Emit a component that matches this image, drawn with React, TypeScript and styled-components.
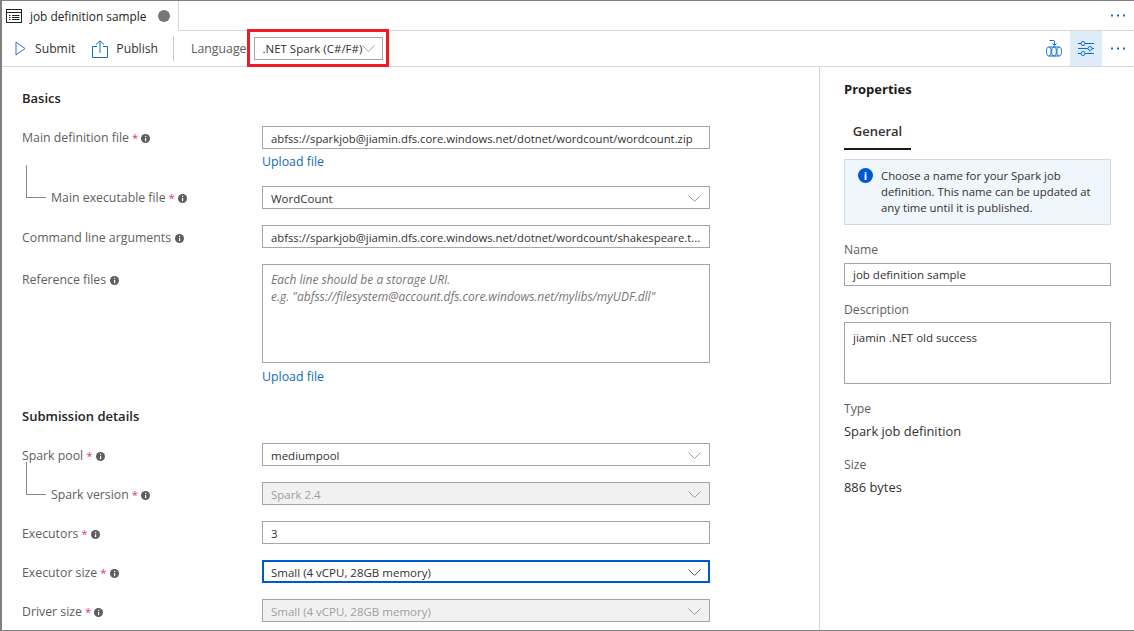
import React from "react";
import styled, { createGlobalStyle } from "styled-components";

const Global = createGlobalStyle`
  html, body { margin: 0; padding: 0; background: #fff; }
  body { font-family: "Open Sans", "Noto Sans", "Liberation Sans", sans-serif; font-size: 12px; color: #323130; }
  * { box-sizing: border-box; }
`;

const Frame = styled.div`
  width: 1134px; height: 631px; overflow: hidden; background: #fff;
  border-top: 1px solid #808080; border-left: 2px solid #808080; border-bottom: 1px solid #808080;
  display: flex; flex-direction: column;
`;
const TabBar = styled.div`
  height: 30px; flex: none; display: flex; align-items: stretch; justify-content: space-between;
  border-bottom: 1px solid #d8d8d8;
`;
const Tab = styled.div`
  width: 177px; display: flex; align-items: center; padding-left: 4px; gap: 8px;
  border-right: 1px solid #d8d8d8; margin-bottom: -1px; background: #fff; font-size: 11.85px; color: #252423;
`;
const TabTitle = styled.span` flex: 1; white-space: nowrap; `;
const DirtyDot = styled.span`
  width: 12px; height: 12px; border-radius: 50%; background: #7a7574; margin-right: 8px;
`;
const More = styled.div`
  width: 32px; display: flex; align-items: center; justify-content: center; color: #0f6cdd;
`;
const Toolbar = styled.div`
  height: 36px; flex: none; display: flex; align-items: center; border-bottom: 1px solid #d8d8d8; position: relative;
`;
const ToolButton = styled.div<{ $gap: number; $left: number }>`
  display: flex; align-items: center; gap: ${p => p.$gap}px; margin-left: ${p => p.$left}px; color: #323130; font-size: 12.2px;
`;
const ToolSep = styled.div` width: 1px; height: 25px; background: #c8c8c8; margin: 0 17px 0 15px; `;
const LangLabel = styled.span` color: #605e5c; font-size: 12.3px; `;
const Highlight = styled.div`
  border: 3px solid #ed1c24; height: 38px; margin: -1px 0 0 1px; padding: 3px; width: 142px; display: flex; align-items: center;
`;
const LangSelect = styled.div`
  width: 130px; height: 23px; border: 1px solid #a6a6a6; display: flex; align-items: center; justify-content: space-between;
  padding: 0 7px 0 7px; font-size: 11.5px; color: #323130; white-space: nowrap; margin-left: 1px;
`;
const ToolRight = styled.div` margin-left: auto; display: flex; align-items: stretch; height: 35px; `;
const IconButton = styled.div<{ $active?: boolean }>`
  width: 32px; display: flex; align-items: center; justify-content: center; background: ${p => (p.$active ? "#deecf9" : "transparent")};
`;
const Body = styled.div` flex: 1; display: flex; min-height: 0; `;
const Main = styled.div`
  width: 818px; flex: none; border-right: 1px solid #d2d2d2; padding: 21px 0 0 20px; overflow: hidden;
`;
const Heading = styled.h2<{ $bottom: number }>`
  margin: 0 0 ${p => p.$bottom}px; font-size: 13px; line-height: 20px; font-weight: 600; color: #252423;
`;
const Row = styled.div<{ $bottom?: number }>`
  display: flex; align-items: flex-start; margin-bottom: ${p => p.$bottom ?? 16}px;
`;
const Label = styled.div<{ $child?: boolean; $tall?: number; $drop?: number; $shift?: number }>`
  width: 240px; flex: none; height: 23px; display: flex; align-items: center; gap: 4px; color: #605e5c; font-size: 12.3px;
  padding-left: ${p => (p.$child ? 29 : 0)}px; padding-top: ${p => p.$shift ?? 1}px; position: relative; white-space: nowrap;
  ${p => p.$child && `
    &::before {
      content: ""; position: absolute; left: 4px; bottom: ${p.$drop}px; width: 19px; height: ${p.$tall}px;
      border-left: 1px solid #8a8886; border-bottom: 1px solid #8a8886;
    }
  `}
`;
const Req = styled.span` color: #d9435f; font-size: 11.5px; margin-left: -1px; margin-right: -1px; `;
const Control = styled.div` width: 448px; flex: none; `;
const Field = styled.div<{ $disabled?: boolean; $focus?: boolean; $long?: boolean }>`
  height: 23px; display: flex; align-items: center; justify-content: space-between; white-space: nowrap; overflow: hidden;
  border: ${p => (p.$focus ? "2px solid #0058d1" : "1px solid #a6a6a6")};
  padding: 1px ${p => (p.$focus ? 7 : 8)}px 0;
  background: ${p => (p.$disabled ? "#f1f1f1" : "#fff")};
  color: ${p => (p.$disabled ? "#a19f9d" : "#323130")};
  font-size: ${p => (p.$long ? 11.3 : 11.5)}px;
`;
const TextArea = styled.div`
  height: 99px; border: 1px solid #a6a6a6; padding: 6px 8px; color: #7a7574; font-style: italic; font-size: 12px; line-height: 17px;
`;
const UploadLink = styled.div<{ $top: number }>`
  color: #0f6cbd; font-size: 12.35px; height: 16px; line-height: 16px; margin-top: ${p => p.$top}px;
`;
const Side = styled.div` flex: 1; padding: 12px 23px 0 24px; `;
const SideTitle = styled.div` font-weight: 700; font-size: 13px; line-height: 20px; color: #1b1a19; margin-bottom: 22px; `;
const SideTab = styled.div`
  width: 67px; height: 29px; border-bottom: 2px solid #1b1a19; text-align: center; font-size: 13px; line-height: 21px; font-weight: 600; color: #323130; margin-bottom: 9px;
`;
const Notice = styled.div`
  height: 66px; background: #eff6fc; border: 1px solid #cfdbea; display: flex; gap: 8px; padding: 8px 8px 0 13px; font-size: 11.35px; line-height: 16px; color: #323130;
`;
const NoticeIcon = styled.div`
  width: 15px; height: 15px; flex: none; border-radius: 50%; background: #0058d1; color: #fff; display: flex; align-items: center; justify-content: center;
  font-size: 11px; font-weight: 700; line-height: 15px;
`;
const SideLabel = styled.div<{ $top: number; $bottom: number }>`
  color: #605e5c; font-size: 12.2px; line-height: 16px; margin-top: ${p => p.$top}px; margin-bottom: ${p => p.$bottom}px;
`;
const SideInput = styled.div`
  height: 23px; border: 1px solid #a6a6a6; padding: 0 8px; display: flex; align-items: center; font-size: 11.5px; color: #323130;
`;
const SideArea = styled.div`
  height: 62px; border: 1px solid #a6a6a6; padding: 6px 8px; font-size: 11.5px; line-height: 17px; color: #323130;
`;
const SideValue = styled.div` font-size: 12.9px; line-height: 18px; color: #323130; `;

const Info = () => (
  <svg width="9" height="9" viewBox="0 0 9 9" style={{ marginTop: 2 }}>
    <circle cx="4.5" cy="4.5" r="4.5" fill="#605e5c" />
    <rect x="4" y="4" width="1.2" height="3.2" fill="#fff" />
    <rect x="4" y="1.9" width="1.2" height="1.2" fill="#fff" />
  </svg>
);
const Chevron = ({ color = "#8aa0b5" }: { color?: string }) => (
  <svg width="13" height="7" viewBox="0 0 13 7" fill="none"><path d="M.5.5l6 6 6-6" stroke={color} strokeWidth="1" /></svg>
);
const Dots = ({ color = "#0f6cdd" }: { color?: string }) => (
  <svg width="14" height="3" viewBox="0 0 14 3"><g fill={color}><rect width="2" height="2" x="0" y="0.5" /><rect width="2" height="2" x="6" y="0.5" /><rect width="2" height="2" x="12" y="0.5" /></g></svg>
);

const LabelText = ({ text, req }: { text: string; req?: boolean }) => (
  <>
    <span>{text}</span>
    {req && <Req>*</Req>}
    <Info />
  </>
);

export default function App() {
  return (
    <Frame>
      <Global />
      <TabBar>
        <Tab>
          <svg width="16" height="16" viewBox="0 0 16 16" fill="none" stroke="#252423" strokeWidth="1">
            <rect x=".5" y="1.5" width="15" height="13" />
            <path d="M.5 4.5h15M3 7.5h1.5M6 7.5h7.5M3 9.5h1.5M6 9.5h7.5M3 11.5h1.5M6 11.5h7.5" />
          </svg>
          <TabTitle>job definition sample</TabTitle>
          <DirtyDot />
        </Tab>
        <More><Dots /></More>
      </TabBar>
      <Toolbar>
        <ToolButton $gap={9} $left={13}>
          <svg width="11" height="15" viewBox="0 0 11 15" fill="none"><path d="M1 1l9 6.5L1 14z" stroke="#2f6fd0" strokeWidth="1" /></svg>
          <span>Submit</span>
        </ToolButton>
        <ToolButton $gap={8} $left={17}>
          <svg width="16" height="18" viewBox="0 0 16 18" fill="none" stroke="#0f6cdd" strokeWidth="1"><path d="M5 6.5H.5v11h15v-11H11M8 13V1M4 4.5L8 .8l4 3.7" /></svg>
          <span>Publish</span>
        </ToolButton>
        <ToolSep />
        <LangLabel>Language</LangLabel>
        <Highlight>
          <LangSelect><span>.NET Spark (C#/F#)</span><Chevron color="#a6a6a6" /></LangSelect>
        </Highlight>
        <ToolRight>
          <IconButton>
            <svg width="16" height="17" viewBox="0 0 16 17" fill="none" stroke="#0f6cdd" strokeWidth="1">
              <path d="M3.5.5h4q1 0 1 1V5M6.5 3.5l2 2 2-2" />
              <ellipse cx="2.8" cy="11.5" rx="2.3" ry="4.5" />
              <ellipse cx="8" cy="11.5" rx="2.3" ry="4.5" />
              <ellipse cx="13.2" cy="11.5" rx="2.3" ry="4.5" />
              <path d="M3 7h10M3 16h10" />
            </svg>
          </IconButton>
          <IconButton $active>
            <svg width="16" height="15" viewBox="0 0 16 15" fill="none" stroke="#0f6cdd" strokeWidth="1">
              <path d="M0 2.5h3M7 2.5h9M0 7.5h10M14 7.5h2M0 12.5h3M7 12.5h9" />
              <circle cx="5" cy="2.5" r="2" /><circle cx="12" cy="7.5" r="2" /><circle cx="5" cy="12.5" r="2" />
            </svg>
          </IconButton>
          <IconButton><Dots /></IconButton>
        </ToolRight>
      </Toolbar>
      <Body>
        <Main>
          <Heading $bottom={18}>Basics</Heading>
          <Row>
            <Label $shift={0}><LabelText text="Main definition file" req /></Label>
            <Control>
              <Field $long>abfss://sparkjob@jiamin.dfs.core.windows.net/dotnet/wordcount/wordcount.zip</Field>
              <UploadLink $top={5}>Upload file</UploadLink>
            </Control>
          </Row>
          <Row>
            <Label $child $tall={32} $drop={11} $shift={0}><LabelText text="Main executable file" req /></Label>
            <Control><Field><span>WordCount</span><Chevron /></Field></Control>
          </Row>
          <Row>
            <Label><LabelText text="Command line arguments" /></Label>
            <Control><Field $long>abfss://sparkjob@jiamin.dfs.core.windows.net/dotnet/wordcount/shakespeare.t...</Field></Control>
          </Row>
          <Row $bottom={21}>
            <Label $shift={8}><LabelText text="Reference files" /></Label>
            <Control>
              <TextArea>Each line should be a storage URI.<br />e.g. "abfss://filesystem@account.dfs.core.windows.net/mylibs/myUDF.dll"</TextArea>
              <UploadLink $top={6}>Upload file</UploadLink>
            </Control>
          </Row>
          <Heading $bottom={17}>Submission details</Heading>
          <Row>
            <Label><LabelText text="Spark pool" req /></Label>
            <Control><Field><span>mediumpool</span><Chevron /></Field></Control>
          </Row>
          <Row>
            <Label $child $tall={32} $drop={10}><LabelText text="Spark version" req /></Label>
            <Control><Field $disabled><span>Spark 2.4</span><Chevron /></Field></Control>
          </Row>
          <Row>
            <Label><LabelText text="Executors" req /></Label>
            <Control><Field><span>3</span></Field></Control>
          </Row>
          <Row>
            <Label><LabelText text="Executor size" req /></Label>
            <Control><Field $focus><span>Small (4 vCPU, 28GB memory)</span><Chevron color="#5c5a58" /></Field></Control>
          </Row>
          <Row>
            <Label><LabelText text="Driver size" req /></Label>
            <Control><Field $disabled><span>Small (4 vCPU, 28GB memory)</span><Chevron /></Field></Control>
          </Row>
        </Main>
        <Side>
          <SideTitle>Properties</SideTitle>
          <SideTab>General</SideTab>
          <Notice>
            <NoticeIcon>i</NoticeIcon>
            <div>Choose a name for your Spark job definition. This name can be updated at any time until it is published.</div>
          </Notice>
          <SideLabel $top={17} $bottom={5}>Name</SideLabel>
          <SideInput>job definition sample</SideInput>
          <SideLabel $top={16} $bottom={4}>Description</SideLabel>
          <SideArea>jiamin .NET old success</SideArea>
          <SideLabel $top={17} $bottom={5}>Type</SideLabel>
          <SideValue>Spark job definition</SideValue>
          <SideLabel $top={17} $bottom={5}>Size</SideLabel>
          <SideValue>886 bytes</SideValue>
        </Side>
      </Body>
    </Frame>
  );
}
